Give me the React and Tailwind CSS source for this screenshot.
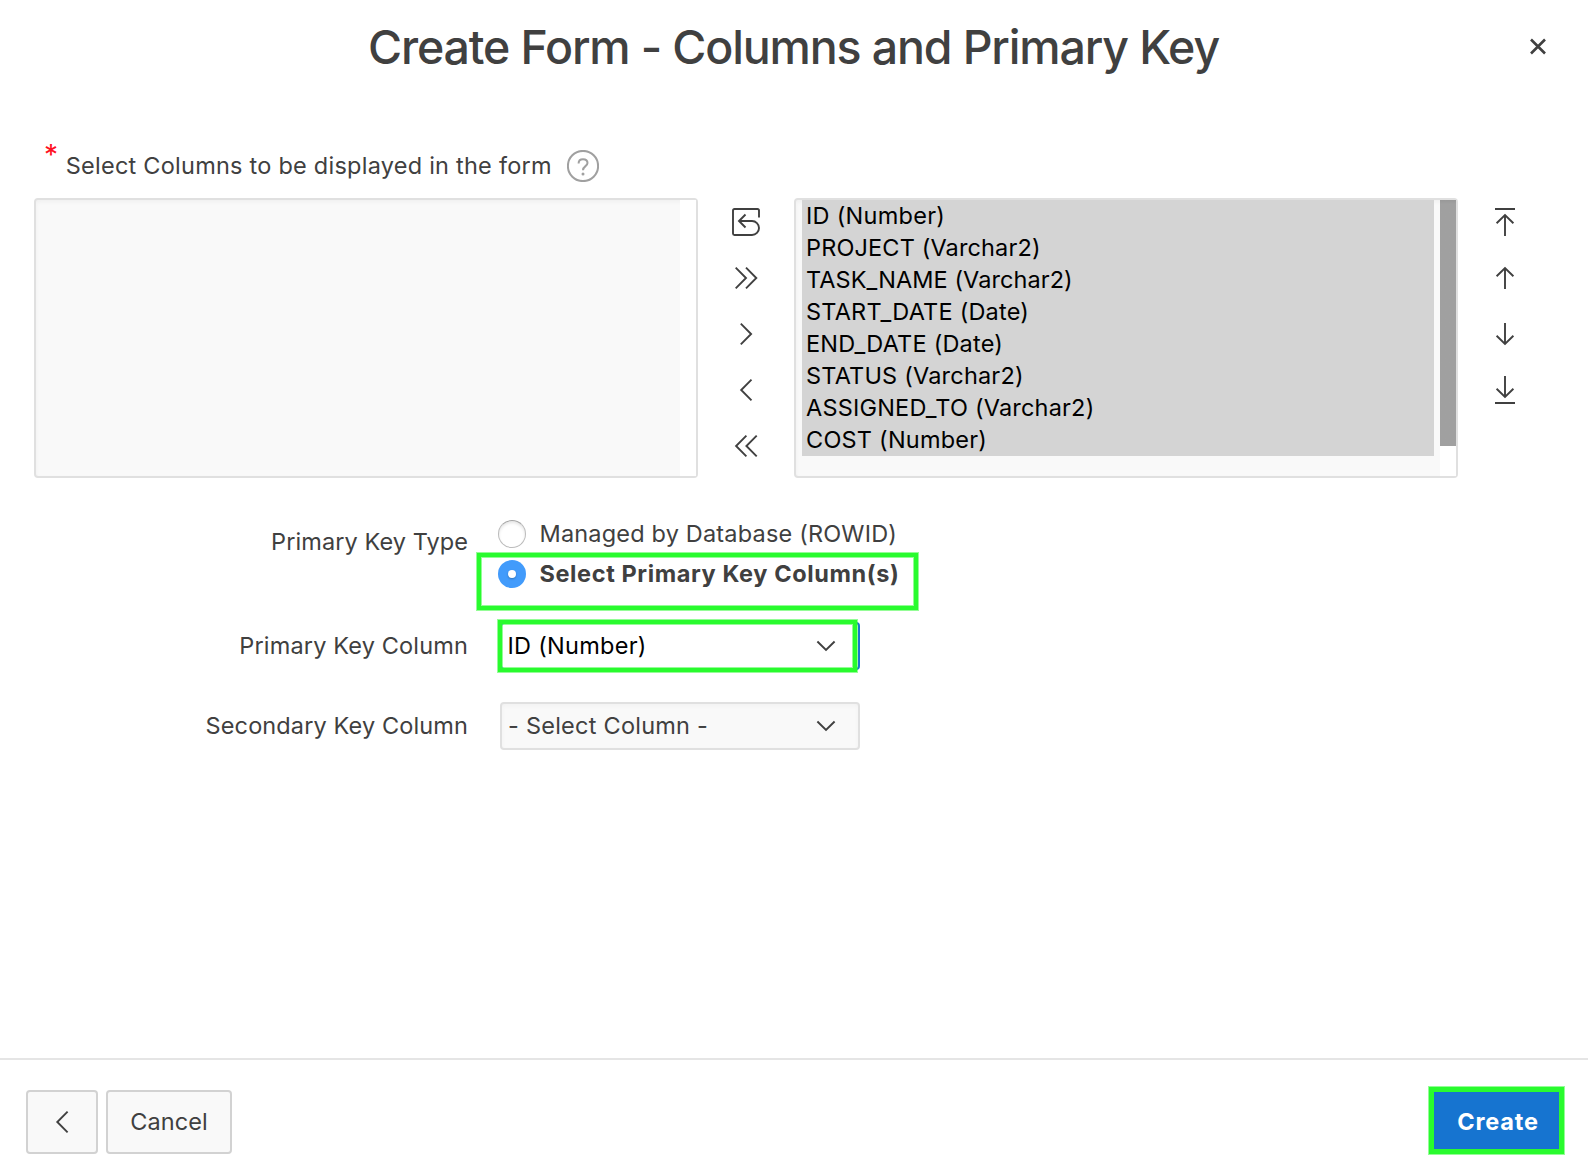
import React from "react";

const options = [
  { label: "ID (Number)", tracking: "tracking-[0.27px]" },
  { label: "PROJECT (Varchar2)", tracking: "tracking-[0.14px]" },
  { label: "TASK_NAME (Varchar2)", tracking: "tracking-[0.08px]" },
  { label: "START_DATE (Date)", tracking: "tracking-[0.22px]" },
  { label: "END_DATE (Date)", tracking: "tracking-[0.22px]" },
  { label: "STATUS (Varchar2)", tracking: "tracking-[0.2px]" },
  { label: "ASSIGNED_TO (Varchar2)", tracking: "tracking-[0.2px]" },
  { label: "COST (Number)", tracking: "tracking-[0.22px]" },
];

const shuttleIcons = [
  { name: "Reset", d: "M27 9.5V2.5Q27 1 25.5 1H2.5Q1 1 1 2.5V25.5Q1 27 2.5 27H20A7 7 0 0 0 20 13H7M13.5 6.5L7 13L13.5 19.5" },
  { name: "Move all", d: "M3.7 3.7L14 14L3.7 24.3M14 3.7L24.3 14L14 24.3" },
  { name: "Move", d: "M8.8 3.7L19.1 14L8.8 24.3" },
  { name: "Remove", d: "M19.5 3.7L9.2 14L19.5 24.3" },
  { name: "Remove all", d: "M14.4 3.7L4.1 14L14.4 24.3M24.7 3.7L14.4 14L24.7 24.3" },
];

const orderIcons = [
  { name: "Top", d: "M4 1H24M14 28V7M5.6 15.2L14 7L22.4 15.2" },
  { name: "Up", d: "M14 25V4M5.6 12.2L14 4L22.4 12.2" },
  { name: "Down", d: "M14 3V24M5.6 15.8L14 24L22.4 15.8" },
  { name: "Bottom", d: "M14 0V21M5.6 12.8L14 21L22.4 12.8M4 27H24" },
];

function IconButton({ name, d }) {
  return (
    <button aria-label={name} className="h-7 w-7">
      <svg viewBox="0 0 28 28" className="h-7 w-7 overflow-visible" fill="none" stroke="#404040" strokeWidth="1.9">
        <path d={d} />
      </svg>
    </button>
  );
}

function ChevronDown() {
  return (
    <svg viewBox="0 0 20 12" className="h-3 w-5" fill="none" stroke="#404040" strokeWidth="1.9">
      <path d="M1.4 1.5L10 10L18.6 1.5" />
    </svg>
  );
}

function Highlight({ className }) {
  return (
    <div
      className={`pointer-events-none absolute border-4 border-[#29fb2e] shadow-[0_0_0_1px_rgba(41,251,46,0.5),inset_0_0_0_1px_rgba(41,251,46,0.5)] ${className}`}
    />
  );
}

export default function App() {
  return (
    <div className="flex h-[1176px] w-[1588px] flex-col overflow-hidden bg-white font-['Inter',sans-serif] text-[23.5px] leading-8 whitespace-nowrap text-[#404040]">
      <header className="grid h-[93px] shrink-0 grid-cols-[1fr_auto_1fr] items-center pr-[41px]">
        <h1 className="col-start-2 ml-10 text-[46.5px] leading-[60px] font-medium tracking-[-1.15px]">
          Create Form - Columns and Primary Key
        </h1>
        <button aria-label="Close" className="justify-self-end">
          <svg viewBox="0 0 18 18" className="h-[18px] w-[18px]" fill="none" stroke="#404040" strokeWidth="2.6">
            <path d="M2 1.5L16 15.5M16 1.5L2 15.5" />
          </svg>
        </button>
      </header>

      <main className="flex-1 pt-[57px] pl-[34px]">
        <div className="flex h-8 items-center pl-[10px]">
          <span className="-mt-[23px] w-[21.75px] text-[28px] leading-6 text-[#ff0f23]">*</span>
          <span className="-mt-px w-[501.25px] tracking-[0.24px]">Select Columns to be displayed in the form</span>
          <svg viewBox="0 0 32 32" className="h-8 w-8" fill="none" stroke="#a0a0a0" strokeWidth="2">
            <circle cx="16" cy="16" r="15.1" />
            <path d="M11.6 13.4C11.6 10.8 13.5 9.2 16 9.2C18.6 9.2 20.5 10.8 20.5 13.1C20.5 16.2 16 16.2 16 20.2" />
            <circle cx="16" cy="24" r="1.5" fill="#a0a0a0" stroke="none" />
          </svg>
        </div>

        <div className="mt-4 flex">
          <div className="flex h-[280px] w-[664px] justify-end rounded-[4px] border-2 border-[#e0e0e0] bg-[#f9f9f9] shadow-[inset_0_2px_4px_rgba(0,0,0,0.04)]">
            <div className="w-4 bg-white" />
          </div>

          <div className="flex w-24 flex-col items-center gap-7 pt-[10px]">
            {shuttleIcons.map((icon) => (
              <IconButton key={icon.name} {...icon} />
            ))}
          </div>

          <div className="flex h-[280px] w-[664px] rounded-[4px] border-2 border-[#e0e0e0] bg-[#f9f9f9] pl-[6px] text-black shadow-[inset_0_2px_4px_rgba(0,0,0,0.04)]">
            <ul className="mr-[6px] flex-1">
              {options.map(({ label, tracking }) => (
                <li key={label} className={`h-8 bg-[#d4d4d4] pl-1 ${tracking}`}>
                  {label}
                </li>
              ))}
            </ul>
            <div className="w-4 bg-white">
              <div className="h-[246px] bg-[#a0a0a0] bg-linear-to-b from-[#989898] via-[#a0a0a0] via-[4px] to-[#a0a0a0]" />
            </div>
          </div>

          <div className="flex w-[94px] flex-col items-center gap-7 pt-[10px]">
            {orderIcons.map((icon) => (
              <IconButton key={icon.name} {...icon} />
            ))}
          </div>
        </div>

        <div className="mt-[42px] flex h-[102px]">
          <div className="w-[434px] pt-[6px] text-right tracking-[0.08px]">Primary Key Type</div>
          <div className="relative ml-[30px] flex flex-col gap-3">
            <label className="flex h-7 items-center gap-[13.5px] tracking-[0.18px]">
              <span className="h-7 w-7 rounded-full border border-[#bcbcbc] border-t-[#a6a6a6] bg-white shadow-[inset_0_2px_3px_rgba(0,0,0,0.1)]" />
              Managed by Database (ROWID)
            </label>
            <label className="flex h-7 items-center gap-[13.5px] font-bold tracking-[0.61px]">
              <span className="flex h-7 w-7 items-center justify-center rounded-full bg-[#429bfb]">
                <span className="h-2 w-2 rounded-full bg-white shadow-[0_1px_2px_rgba(0,0,0,0.25)]" />
              </span>
              Select Primary Key Column(s)
            </label>
            <Highlight className="top-[33px] left-[-21px] h-[57px] w-[441px]" />
          </div>
        </div>

        <div className="flex h-12 items-center">
          <div className="w-[434px] text-right tracking-[0.15px]">Primary Key Column</div>
          <div className="relative ml-8 flex h-12 w-[360px] items-center justify-between rounded-[4px] border-2 border-[#1b74d0] bg-white pr-[22px] pl-[5.5px] tracking-[0.27px] text-black">
            ID (Number)
            <ChevronDown />
            <Highlight className="top-[-4px] left-[-4px] h-[52px] w-[359px]" />
          </div>
        </div>

        <div className="mt-8 flex h-12 items-center">
          <div className="w-[434px] text-right tracking-[0.12px]">Secondary Key Column</div>
          <div className="ml-8 flex h-12 w-[360px] items-center justify-between rounded-[4px] border-2 border-[#e0e0e0] bg-[#f9f9f9] pr-[22px] pl-[6px] tracking-[0.24px] shadow-[inset_0_2px_4px_rgba(0,0,0,0.03)]">
            - Select Column -
            <ChevronDown />
          </div>
        </div>
      </main>

      <footer className="flex h-[118px] shrink-0 items-start gap-2 border-t-2 border-[#e5e5e5] pr-6 pl-[26px]">
        <button aria-label="Previous" className="mt-[30px] flex h-16 w-[72px] items-center justify-center rounded-[4px] border-2 border-[#d2d2d2] bg-[#f9f9f9]">
          <svg viewBox="0 0 28 28" className="h-7 w-7" fill="none" stroke="#404040" strokeWidth="1.9">
            <path d="M19.6 3.7L9.3 14L19.6 24.3" />
          </svg>
        </button>
        <button className="mt-[30px] h-16 w-[126px] rounded-[4px] border-2 border-[#d2d2d2] bg-[#f9f9f9] tracking-[0.1px]">
          Cancel
        </button>
        <button className="mt-[27px] ml-auto h-[67px] w-[135px] border-[5px] border-[#29fb2e] bg-[#1674d0] pt-[2px] pl-[3px] font-bold tracking-[0.8px] text-white shadow-[0_0_0_1px_rgba(41,251,46,0.5)]">
          Create
        </button>
      </footer>
    </div>
  );
}
